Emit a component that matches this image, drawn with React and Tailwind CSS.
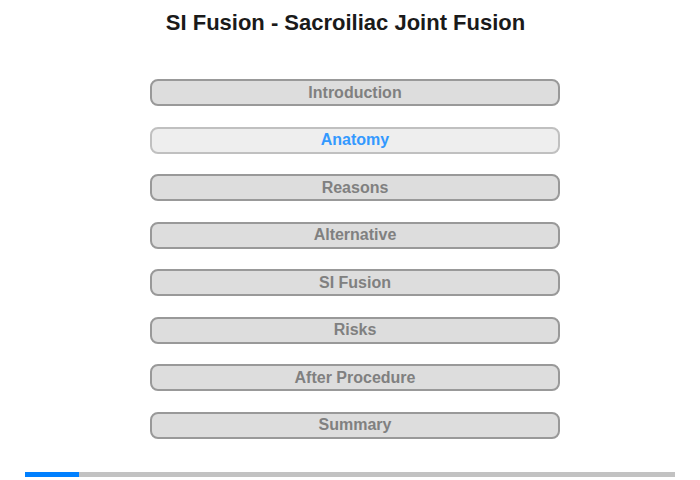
export default function App() {
  const items = ["Introduction", "Anatomy", "Reasons", "Alternative", "SI Fusion", "Risks", "After Procedure", "Summary"];
  return (
    <div className="w-[700px] h-[480px] bg-white relative" style={{ fontFamily: '"Liberation Sans", Arial, sans-serif' }}>
      <div className="pt-[10px] pr-[9px] text-center text-[22px] leading-[26px] font-bold text-[#1a1a1a]">
        SI Fusion - Sacroiliac Joint Fusion
      </div>
      <div className="mt-[43px] ml-[150px] w-[410px] flex flex-col gap-[20.5px]">
        {items.map((t, i) => {
          const active = i === 1;
          return (
            <div
              key={t}
              className={
                active
                  ? "w-[410px] h-[27px] rounded-[8px] border-2 border-[#c0c0c0] bg-[#eeeeee] flex items-center justify-center text-[16px] font-bold text-[#3399ff]"
                  : "w-[410px] h-[27px] rounded-[8px] border-2 border-[#999999] bg-[#dddddd] flex items-center justify-center text-[16px] font-bold text-[#808080]"
              }
            >
              {t}
            </div>
          );
        })}
      </div>
      <div className="absolute left-[25px] top-[472px] w-[650px] h-[5px] bg-[#c2c2c2] flex">
        <div className="w-[54px] h-full bg-[#0080ff]" />
      </div>
    </div>
  );
}
